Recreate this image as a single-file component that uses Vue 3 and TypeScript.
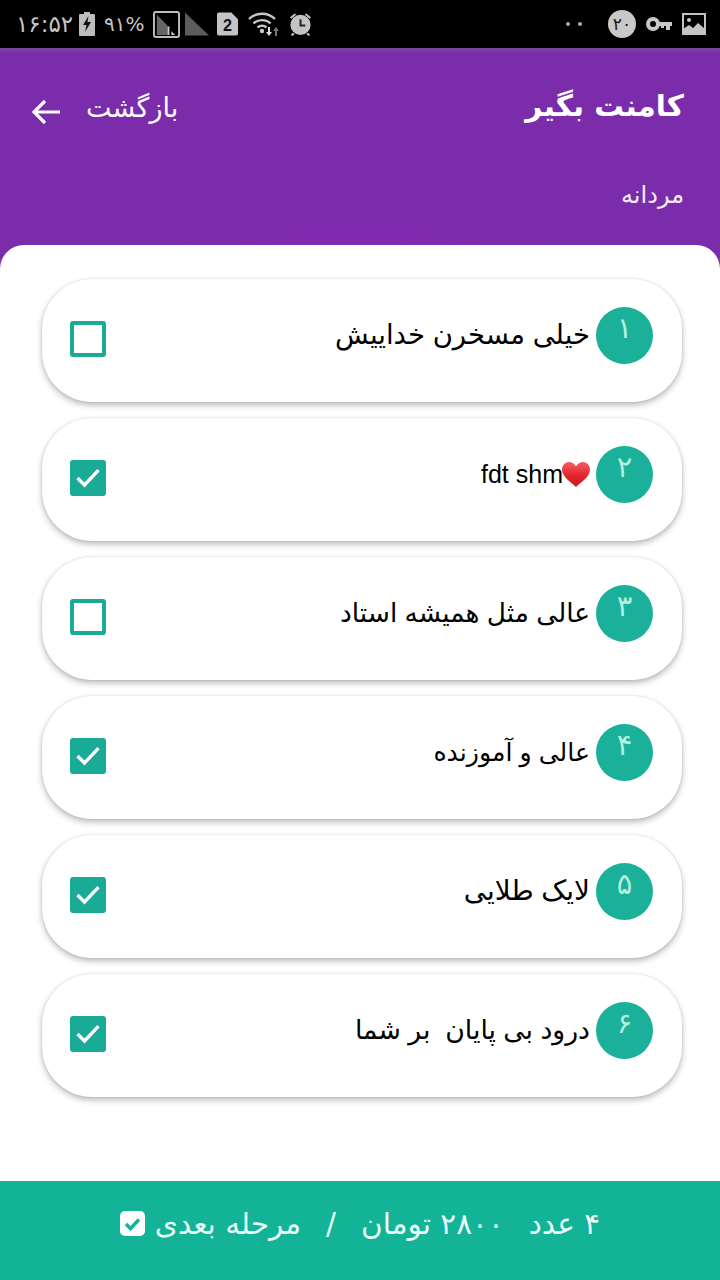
<script setup lang="ts">
interface Row { n: string; text: string; checked: boolean; size: number; heart?: boolean }
const rows: Row[] = [
  { n: '۱', text: 'خیلی مسخرن خداییش', checked: false, size: 27.5 },
  { n: '۲', text: 'fdt shm', checked: true, size: 25, heart: true },
  { n: '۳', text: 'عالی مثل همیشه استاد', checked: false, size: 26.4 },
  { n: '۴', text: 'عالی و آموزنده', checked: true, size: 25.2 },
  { n: '۵', text: 'لایک طلایی', checked: true, size: 27.9 },
  { n: '۶', text: 'درود بی پایان  بر شما', checked: true, size: 26.7 },
]
</script>

<template>
  <div class="page">
    <div class="status">
      <div class="st-left">
        <span class="clock">۱۶:۵۲</span>
        <svg class="bat" width="16" height="24" viewBox="0 0 16 24"><path d="M5 0h6v2h4a1 1 0 0 1 1 1v20a1 1 0 0 1-1 1H1a1 1 0 0 1-1-1V3a1 1 0 0 1 1-1h4z" fill="#bdbdbd"/><path d="M9.5 4 4 13h3.5L6 20l6-10H8.500z" fill="#111"/></svg>
        <span class="pct">۹۱%</span>
        <svg class="sig" width="27" height="27" viewBox="0 0 28 28"><rect x="1" y="1" width="26" height="26" rx="2" fill="#000" stroke="#bdbdbd" stroke-width="2"/><path d="M4 4l11 11v10H4z" fill="#666"/><path d="M15 16h2v9h-2zM19 21l4 4h-4z" fill="#ccc"/></svg>
        <svg class="tri" width="24" height="24" viewBox="0 0 25 24"><path d="M0 0l25 24H0z" fill="#5c5c5c"/></svg>
        <svg class="sim" width="21" height="24" viewBox="0 0 22 24"><path d="M2 0h13l7 7v15a2 2 0 0 1-2 2H2a2 2 0 0 1-2-2V2a2 2 0 0 1 2-2z" fill="#c4c4c4"/><text x="11" y="19" text-anchor="middle" class="sim-t">2</text></svg>
        <svg class="wifi" width="32" height="26" viewBox="0 0 32 26"><g fill="none" stroke="#c8c8c8" stroke-width="2.400"><path d="M1 8C8 1 20 1 27 8"/><path d="M5.500 12.500c4.500-4.500 12.500-4.500 17 0"/><path d="M9.500 16.500c2.500-2.500 6.500-2.500 9 0"/></g><circle cx="14" cy="20" r="2.200" fill="#c8c8c8"/><path d="M20 16h2v5h2l-3 4-3-4h2z" fill="#ddd"/><path d="M27 25v-5h-2l3-4 3 4h-2v5z" fill="#777"/></svg>
        <svg class="alarm" width="25" height="26" viewBox="0 0 26 26"><circle cx="13" cy="14" r="10.500" fill="#c4c4c4"/><path d="M2 6l5-4 1.500 1.500-5 4zM24 6l-5-4-1.500 1.500 5 4zM5 22l-2 2.500 1.500 1L7 23.500zM21 22l2 2.500-1.500 1-2.500-2z" fill="#c4c4c4"/><path d="M13 8v6.500h5" fill="none" stroke="#222" stroke-width="2"/></svg>
      </div>
      <div class="st-right">
        <span class="dots"><i></i><i></i></span>
        <span class="badge20">۲۰</span>
        <svg width="26" height="16" viewBox="0 0 26 16"><circle cx="7" cy="8" r="5" fill="none" stroke="#c8c8c8" stroke-width="4"/><path d="M12 6h14v4h-2v4h-4v-4h-2v2h-3v-2h-3z" fill="#c8c8c8"/></svg>
        <svg width="24" height="22" viewBox="0 0 24 22"><rect x="1" y="1" width="22" height="20" fill="none" stroke="#c4c4c4" stroke-width="2"/><circle cx="7" cy="7" r="2" fill="#c4c4c4"/><path d="M1 21v-5l6-4 4 3 5-5 7 6v5z" fill="#c4c4c4"/></svg>
      </div>
    </div>

    <header class="head">
      <div class="head-top">
        <div class="title">کامنت بگیر</div>
        <div class="back">
          <span class="back-t">بازگشت</span>
          <svg class="arrow" width="32" height="28" viewBox="0 0 32 28"><path d="M30 14H4M15 3 4 14l11 11" fill="none" stroke="#fff" stroke-width="3.200"/></svg>
        </div>
      </div>
      <div class="sub">مردانه</div>
    </header>

    <main class="sheet">
      <div v-for="r in rows" :key="r.n" class="card">
        <div class="num"><span>{{ r.n }}</span></div>
        <div class="text" :style="{ fontSize: r.size + 'px' }">
          <svg v-if="r.heart" class="heart" width="28" height="25" viewBox="0 0 28 25"><defs><linearGradient id="hg" x1="0" y1="0" x2="0" y2="1"><stop offset="0" stop-color="#f4605f"/><stop offset=".55" stop-color="#e3242b"/><stop offset="1" stop-color="#c9161d"/></linearGradient></defs><path d="M14 25C9 20 0 15 0 7.500 0 3 3.500 0 7 0c3 0 5.500 1.500 7 4.500C15.500 1.500 18 0 21 0c3.500 0 7 3 7 7.500C28 15 19 20 14 25z" fill="url(#hg)"/></svg>
          <bdi class="txt">{{ r.text }}</bdi>
        </div>
        <div class="box" :class="{ on: r.checked }">
          <svg v-if="r.checked" width="32" height="30" viewBox="0 0 32 30"><path d="M4 15l8 8L28 6" fill="none" stroke="#fff" stroke-width="3.800"/></svg>
        </div>
      </div>
    </main>

    <footer class="foot">
      <span class="f-text"><span>۴ عدد</span><span>۲۸۰۰ تومان</span><span>/</span><span>مرحله بعدی</span></span>
      <svg width="25" height="25" viewBox="0 0 25 25"><rect width="25" height="25" rx="5" fill="#fff"/><path d="M6 13l4.500 4.500L19 8.500" fill="none" stroke="#13b398" stroke-width="3.400"/></svg>
    </footer>
  </div>
</template>

<style>
html, body { margin: 0; background: #fff; }
</style>

<style scoped>
.page {
  width: 720px;
  height: 1280px;
  display: flex;
  flex-direction: column;
  overflow: hidden;
  background: #7b2cab;
  font-family: "DejaVu Sans", "Noto Sans", sans-serif;
}
.status {
  height: 48px;
  flex: none;
  background: #000;
  display: flex;
  justify-content: space-between;
  align-items: center;
  padding: 0 14px 0 16px;
  color: #c4c4c4;
}
.st-left, .st-right { display: flex; align-items: center; }
.st-right { gap: 10px; }
.clock { font-size: 23px; direction: ltr; width: 56px; white-space: nowrap; }
.bat { margin-left: 7px; }
.pct { font-size: 20px; direction: ltr; margin-left: 9px; width: 40px; white-space: nowrap; }
.sig { margin-left: 9px; }
.tri { margin-left: 5px; }
.sim { margin-left: 8px; }
.wifi { margin-left: 10px; }
.alarm { margin-left: 8px; }
.sim-t { font: bold 17px "Liberation Sans", sans-serif; fill: #111; }
.dots { display: flex; gap: 8px; margin-right: 16px; }
.dots i { width: 4px; height: 4px; border-radius: 50%; background: #aaa; }
.badge20 {
  width: 28px; height: 28px; border-radius: 50%;
  background: #c8c8c8; color: #111; font-size: 17px;
  display: flex; align-items: center; justify-content: center;
}
.head {
  height: 197px;
  flex: none;
  background:
    radial-gradient(ellipse 190px 34px at 360px 200px, #8229b2 0%, rgba(130,41,178,0) 100%),
    linear-gradient(#7c4aa6 0, #7b2cab 5px);
  color: #fff;
  box-sizing: border-box;
  padding: 36px 36px 0 30px;
  display: flex;
  flex-direction: column;
}
.head-top { display: flex; justify-content: space-between; align-items: center; direction: rtl; }
.title { font-size: 29.500px; font-weight: 700; line-height: 44px; }
.back { display: flex; align-items: center; gap: 24px; font-size: 27px; }
.back-t { margin-top: 2px; }
.arrow { margin-top: 12px; }
.sub { direction: rtl; font-size: 24px; margin-top: 49px; line-height: 36px; color: #f5ecfa; }
.sheet {
  flex: 1;
  background: #fff;
  border-radius: 24px 24px 0 0;
  padding: 34px 38px 0 42px;
  display: flex;
  flex-direction: column;
  gap: 16px;
}
.card {
  height: 123px;
  flex: none;
  border-radius: 50px;
  background: #fff;
  box-shadow: 0 3px 6px rgba(0,0,0,.28), 0 0 2px rgba(0,0,0,.12);
  display: flex;
  direction: rtl;
  align-items: flex-start;
  box-sizing: border-box;
  padding: 28px 29px 0 28px;
}
.num {
  width: 57px; height: 57px; border-radius: 50%;
  background: #1ab09a; color: #b5efe0; font-size: 29px;
  display: flex; align-items: center; justify-content: center;
  flex: none;
}
.num span { position: relative; top: -8px; }
.text {
  flex: 1;
  margin-right: 6px;
  color: #000;
  line-height: 56px;
  display: flex;
  align-items: center;
}
.heart { margin-left: -1px; margin-top: 1px; }
.txt { font-family: "Liberation Sans", "DejaVu Sans", sans-serif; white-space: pre; }
.box {
  width: 36px; height: 36px; box-sizing: border-box;
  border: 4px solid #1aab96; border-radius: 3px;
  margin-top: 14px; flex: none;
  display: flex; align-items: center; justify-content: center;
}
.box.on { background: #1aab96; }
.foot {
  margin-top: auto;
  height: 99px;
  flex: none;
  background: #13b398;
  display: flex;
  direction: rtl;
  align-items: center;
  justify-content: center;
  gap: 10px;
  color: #eafaf6;
  font-size: 29.500px;
  padding-bottom: 14px;
  box-sizing: border-box;
}
.f-text { display: flex; gap: 25px; }
</style>
